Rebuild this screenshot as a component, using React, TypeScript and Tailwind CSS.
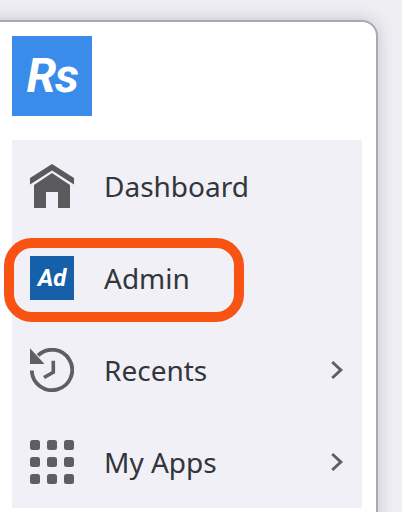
import React from "react";

function Home() {
  return (
    <svg width="44" height="44" viewBox="0 0 44 44" className="block">
      <path d="M22 0 L44 14 V20.5 L22 6.5 L0 20.5 V14 Z" fill="#5a5a5c" />
      <path d="M22 9 L40 21 V44 H28 V28 H16 V44 H4 V21 Z" fill="#5a5a5c" />
    </svg>
  );
}

function History() {
  return (
    <svg width="44" height="44" viewBox="0 0 44 44" className="block shrink-0" fill="none">
      <path d="M8 7.4 A20.2 20.2 0 1 1 1.8 22.5" stroke="#5f5f62" strokeWidth="3.8" />
      <path d="M0 0.3 L14.5 16 H0 Z" fill="#5f5f62" />
      <path d="M23.3 12.7 V24.2 L14 29.5" stroke="#5f5f62" strokeWidth="3.6" />
    </svg>
  );
}

function Grid() {
  return (
    <div className="grid w-[44px] grid-cols-3 gap-x-[7px] gap-y-[7px]">
      {Array.from({ length: 9 }).map((_, i) => (
        <div key={i} className="h-[10px] w-[10px] rounded-[2.5px] bg-[#5f5f62]" />
      ))}
    </div>
  );
}

function Chevron() {
  return (
    <svg width="14" height="20" viewBox="0 0 14 20" fill="none" className="block">
      <path d="M2.2 2 L10.8 10 L2.2 18" stroke="#5f5f62" strokeWidth="3" />
    </svg>
  );
}

function Row({ icon, label, chevron }: { icon: React.ReactNode; label: string; chevron?: boolean }) {
  return (
    <div className="flex h-[92px] items-center pl-[18px] pr-[18px]">
      <div className="flex h-[44px] w-[44px] items-center justify-center">{icon}</div>
      <span className="ml-[30px] flex-1 font-['Noto_Sans',sans-serif] text-[28px] leading-[36px] text-[#32363a]">
        {label}
      </span>
      {chevron && <Chevron />}
    </div>
  );
}

export default function App() {
  return (
    <div className="h-[512px] w-[402px] overflow-hidden bg-[#efeef3] pt-[20px]">
      <div className="ml-[-40px] h-[520px] w-[418px] rounded-tr-[16px] border-2 border-[#a9a9b6] bg-white pl-[50px] pr-[14px] pt-[14px] shadow-[0_0_16px_rgba(80,75,95,0.26)]">
        <div className="flex h-[80px] w-[80px] items-center justify-center bg-[#398ce9] font-['Roboto',sans-serif] text-[48px] font-bold italic leading-none tracking-[-1.5px] text-white">
          Rs
        </div>
        <div className="mt-[24px] bg-[#f0f0f6]">
          <Row icon={<Home />} label="Dashboard" />
          <div className="relative">
            <Row
              icon={
                <div className="flex h-[44px] w-[44px] items-center justify-center bg-[#1560a9] font-['Roboto',sans-serif] text-[24px] font-bold italic leading-none text-white">
                  Ad
                </div>
              }
              label="Admin"
            />
            <div className="absolute left-[-8px] top-[6px] h-[84px] w-[240px] rounded-[28px] border-[10px] border-[#f95314]" />
          </div>
          <Row icon={<History />} label="Recents" chevron />
          <Row icon={<Grid />} label="My Apps" chevron />
        </div>
      </div>
    </div>
  );
}
